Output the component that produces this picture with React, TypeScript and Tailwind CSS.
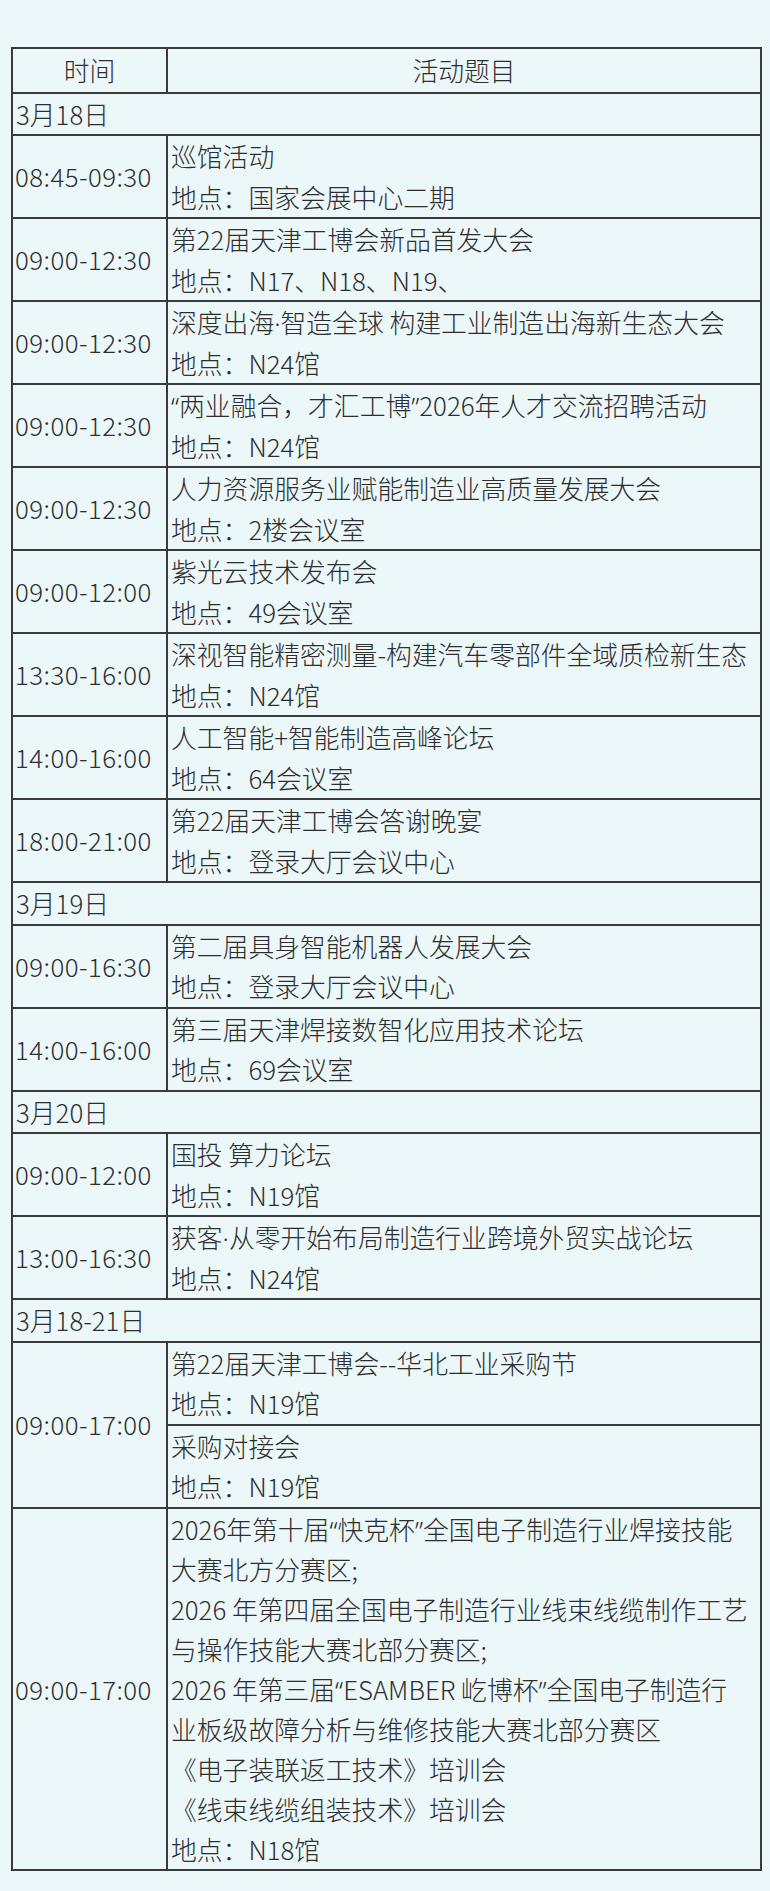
type Item = { lines: string[]; tight?: boolean };
type Row =
  | { kind: 'date'; label: string }
  | { kind: 'slot'; time: string; items: Item[] };

const rows: Row[] = [
  { kind: 'date', label: '3月18日' },
  { kind: 'slot', time: '08:45-09:30', items: [{ lines: ['巡馆活动', '地点：国家会展中心二期'] }] },
  { kind: 'slot', time: '09:00-12:30', items: [{ lines: ['第22届天津工博会新品首发大会', '地点：N17、N18、N19、'] }] },
  { kind: 'slot', time: '09:00-12:30', items: [{ lines: ['深度出海·智造全球 构建工业制造出海新生态大会', '地点：N24馆'] }] },
  { kind: 'slot', time: '09:00-12:30', items: [{ lines: ['“两业融合，才汇工博”2026年人才交流招聘活动', '地点：N24馆'] }] },
  { kind: 'slot', time: '09:00-12:30', items: [{ lines: ['人力资源服务业赋能制造业高质量发展大会', '地点：2楼会议室'] }] },
  { kind: 'slot', time: '09:00-12:00', items: [{ lines: ['紫光云技术发布会', '地点：49会议室'] }] },
  { kind: 'slot', time: '13:30-16:00', items: [{ lines: ['深视智能精密测量-构建汽车零部件全域质检新生态', '地点：N24馆'] }] },
  { kind: 'slot', time: '14:00-16:00', items: [{ lines: ['人工智能+智能制造高峰论坛', '地点：64会议室'] }] },
  { kind: 'slot', time: '18:00-21:00', items: [{ lines: ['第22届天津工博会答谢晚宴', '地点：登录大厅会议中心'] }] },
  { kind: 'date', label: '3月19日' },
  { kind: 'slot', time: '09:00-16:30', items: [{ lines: ['第二届具身智能机器人发展大会', '地点：登录大厅会议中心'] }] },
  { kind: 'slot', time: '14:00-16:00', items: [{ lines: ['第三届天津焊接数智化应用技术论坛', '地点：69会议室'] }] },
  { kind: 'date', label: '3月20日' },
  { kind: 'slot', time: '09:00-12:00', items: [{ lines: ['国投 算力论坛', '地点：N19馆'] }] },
  { kind: 'slot', time: '13:00-16:30', items: [{ lines: ['获客·从零开始布局制造行业跨境外贸实战论坛', '地点：N24馆'] }] },
  { kind: 'date', label: '3月18-21日' },
  {
    kind: 'slot',
    time: '09:00-17:00',
    items: [
      { lines: ['第22届天津工博会--华北工业采购节', '地点：N19馆'] },
      { lines: ['采购对接会', '地点：N19馆'] },
    ],
  },
  {
    kind: 'slot',
    time: '09:00-17:00',
    items: [
      {
        tight: true,
        lines: [
          '2026年第十届“快克杯”全国电子制造行业焊接技能',
          '大赛北方分赛区;',
          '2026 年第四届全国电子制造行业线束线缆制作工艺',
          '与操作技能大赛北部分赛区;',
          '2026 年第三届“ESAMBER 屹博杯”全国电子制造行',
          '业板级故障分析与维修技能大赛北部分赛区',
          '《电子装联返工技术》培训会',
          '《线束线缆组装技术》培训会',
          '地点：N18馆',
        ],
      },
    ],
  },
];

const cell = 'border-2 border-[#3a3a3a] p-0 align-middle';

// the CJK font draws “ ” · full width; the screenshot has narrow Latin ones
function Text({ value }: { value: string }) {
  return (
    <>
      {value.split(/([“”·])/).map((part, i) =>
        /^[“”·]$/.test(part) ? (
          <span key={i} className="font-['Noto_Sans',sans-serif] leading-none">
            {part}
          </span>
        ) : (
          part
        ),
      )}
    </>
  );
}

function Lines({ lines, tight }: Item) {
  return (
    <div className={tight ? 'leading-[40.1px]' : undefined}>
      {lines.map((l, i) => (
        <div key={i} className="whitespace-nowrap">
          <Text value={l} />
        </div>
      ))}
    </div>
  );
}

export default function App() {
  return (
    <div
      className="min-h-[1891px] bg-[#ecf7f9] pt-[47px] pl-[11px] text-[25.8px] leading-[40.5px] font-light text-[#2e2e2e]"
      style={{ fontFamily: '"Noto Sans CJK SC", "Noto Sans", sans-serif' }}
    >
      <table className="w-[751px] table-fixed border-collapse">
        <colgroup>
          <col className="w-[155px]" />
          <col />
        </colgroup>
        <thead>
          <tr>
            <th className={`${cell} py-px text-center font-light`}>时间</th>
            <th className={`${cell} py-px text-center font-light`}>活动题目</th>
          </tr>
        </thead>
        <tbody>
          {rows.flatMap((row, r) => {
            if (row.kind === 'date') {
              return [
                <tr key={r}>
                  <td colSpan={2} className={`${cell} pl-[3px]`}>
                    {row.label}
                  </td>
                </tr>,
              ];
            }
            return row.items.map((item, i) => (
              <tr key={`${r}-${i}`}>
                {i === 0 && (
                  <td
                    rowSpan={row.items.length}
                    className={`${cell} pl-[2px] tracking-[0.45px] whitespace-nowrap`}
                  >
                    {row.time}
                  </td>
                )}
                <td className={`${cell} pl-[3px]`}>
                  <Lines {...item} />
                </td>
              </tr>
            ));
          })}
        </tbody>
      </table>
    </div>
  );
}
